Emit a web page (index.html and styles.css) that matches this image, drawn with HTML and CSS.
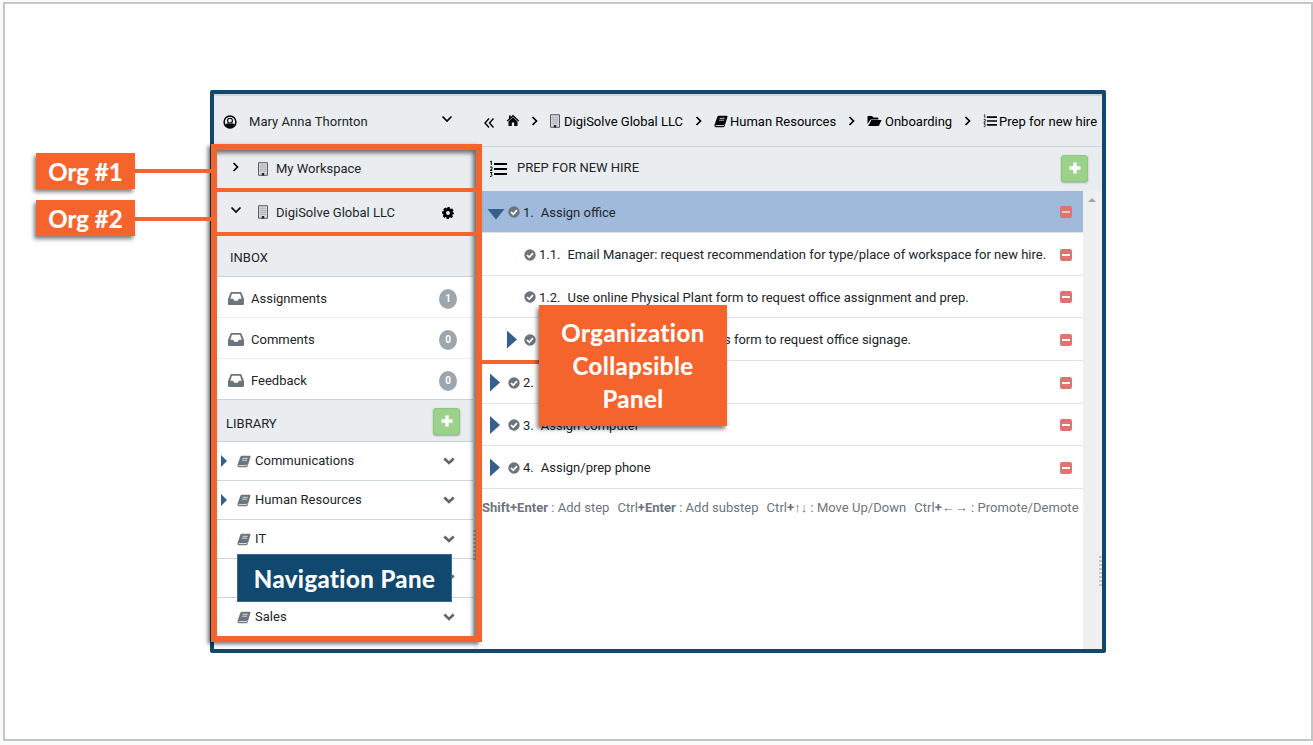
FILE: index.html
```html
<!DOCTYPE html>
<html lang="en">
<head>
    <meta charset="UTF-8">
    <meta name="viewport" content="width=device-width, initial-scale=1.0">
    <title>Navigation Pane</title>
    <link rel="stylesheet" href="styles.css">
</head>
<body>
    <!-- Icon set -->
    <svg class="sprite" width="0" height="0">
        <symbol id="user" viewBox="0 0 14 14"><circle cx="7" cy="7" r="5.900" fill="none" stroke="currentColor" stroke-width="1.500"/><path d="M2 10Q3.200 8.400 5 8.300Q7 9.700 9 8.300Q10.800 8.400 12 10Q10 13 7 13Q4 13 2 10Z"/><circle cx="7" cy="5.700" r="2.400" fill="none" stroke="currentColor" stroke-width="1.100"/></symbol>
        <symbol id="down" viewBox="0 0 12 12"><path d="M1.500 3.500L6 8L10.500 3.500" fill="none" stroke="currentColor" stroke-width="1.700"/></symbol>
        <symbol id="right" viewBox="0 0 12 12"><path d="M3.500 2L7.500 6L3.500 10" fill="none" stroke="currentColor" stroke-width="1.700"/></symbol>
        <symbol id="back" viewBox="0 0 12 12"><path d="M6 1.500L2 6L6 10.500M10.500 1.500L6.500 6L10.500 10.500" fill="none" stroke="currentColor" stroke-width="1.400"/></symbol>
        <symbol id="building" viewBox="0 0 12 14"><path d="M1.500 .700H10.500V13.300H1.500Z" fill="#d5d8dc" stroke="#5c5c68" stroke-width="1"/><path d="M4 2V10M6 2V10M8 2V10M2.500 3.500H9.500M2.500 5.500H9.500M2.500 7.500H9.500M2.500 9.500H9.500" stroke="#aeb1b8" stroke-width=".6"/><path d="M4.800 11H7.200V13.500H4.800Z" fill="#222"/></symbol>
        <symbol id="cog" viewBox="0 0 14 14"><circle cx="7" cy="7" r="3.500" fill="none" stroke="currentColor" stroke-width="3"/><circle cx="7" cy="7" r="5" fill="none" stroke="currentColor" stroke-width="2" stroke-dasharray="2.300 1.627" stroke-dashoffset="1.150"/></symbol>
        <symbol id="home" viewBox="0 0 14 13"><path d="M7 .8L13.300 6.700L12.400 7.600L7 2.700L1.600 7.600L.7 6.700L3 4.500V1.500H4.700V3Z"/><path d="M7 3.300L11.500 7.400V12H8.200V8.500H5.800V12H2.500V7.400Z"/></symbol>
        <symbol id="book" viewBox="0 0 14 13"><path d="M5 .7H12.700Q13.800 .8 13.400 2L10.800 10.800Q10.500 12.300 9 12.300H1.800Q0 12 .5 9.800L3.300 2Q3.700 .7 5 .7Z"/><path d="M5.600 3.300H10.700M5 5.200H10.100" stroke="#eef0f2" stroke-width=".8"/><path d="M1.700 10.600H9.200Q10 10.500 10.300 9.600" fill="none" stroke="#eef0f2" stroke-width=".9"/></symbol>
        <symbol id="folder" viewBox="0 0 15 12"><path d="M.5 9V1.800Q.5 1 1.400 1H5L6.500 2.600H10.500Q11.500 2.600 11.500 4.600H4.200Q3.500 4.600 3 5.300Z"/><path d="M4.400 5H14.600L12.300 10Q12 11 11 11H1.100Z"/></symbol>
        <symbol id="list" viewBox="0 0 18 18"><path d="M5 4H18M5 9H18M5 14H18" stroke="currentColor" stroke-width="2.100"/><path d="M1 2L2.300 1V5M1 7H3V9L1 10.500H3.300M1 12.500H3L2 14.200Q3.200 14.300 2.900 15.800Q2.400 17 1 16.400" fill="none" stroke="currentColor" stroke-width="1"/></symbol>
        <symbol id="inbox" viewBox="0 0 16 13"><path fill-rule="evenodd" d="M3.500 0H12.500Q13.300 0 13.600 1L16 7V12Q16 13 15 13H1Q0 13 0 12V7L2.400 1Q2.700 0 3.500 0ZM4 1.800L2.300 6.800H5.200L6.200 8.800H9.800L10.800 6.800H13.700L12 1.800Z"/></symbol>
        <symbol id="check" viewBox="0 0 12 12"><circle cx="6" cy="6" r="5.700"/><path d="M3 6L5.200 8.200L9 4.200" fill="none" stroke="#fff" stroke-width="1.700"/></symbol>
        <symbol id="chevron" viewBox="0 0 12 10"><path d="M1.300 2.500L6 7L10.700 2.500" fill="none" stroke="currentColor" stroke-width="2.700"/></symbol>
        <symbol id="plus" viewBox="0 0 12 12"><path d="M6 .5V11.500M.5 6H11.500" stroke="currentColor" stroke-width="3.400"/></symbol>
    </svg>

    <div class="slide">
        <div class="app">
            <aside class="nav">
                <div class="nav-user"><svg class="i14"><use href="#user"/></svg><span>Mary Anna Thornton</span><svg class="i12 end"><use href="#down"/></svg></div>
                <div class="nav-org first"><svg class="i12"><use href="#right"/></svg><svg class="bld"><use href="#building"/></svg><span>My Workspace</span></div>
                <div class="nav-org"><svg class="i12"><use href="#down"/></svg><svg class="bld"><use href="#building"/></svg><span>DigiSolve Global LLC</span><svg class="i14 end"><use href="#cog"/></svg></div>
                <div class="nav-title inbox-title"><span>INBOX</span></div>
                <div class="nav-inbox"><svg class="tray"><use href="#inbox"/></svg><span>Assignments</span><b class="badge">1</b></div>
                <div class="nav-inbox"><svg class="tray"><use href="#inbox"/></svg><span>Comments</span><b class="badge">0</b></div>
                <div class="nav-inbox last"><svg class="tray"><use href="#inbox"/></svg><span>Feedback</span><b class="badge">0</b></div>
                <div class="nav-title library-title"><span>LIBRARY</span><button class="add"><svg class="i12"><use href="#plus"/></svg></button></div>
                <div class="nav-lib"><i class="tri small"></i><svg class="book"><use href="#book"/></svg><span>Communications</span><svg class="chev"><use href="#chevron"/></svg></div>
                <div class="nav-lib"><i class="tri small"></i><svg class="book"><use href="#book"/></svg><span>Human Resources</span><svg class="chev"><use href="#chevron"/></svg></div>
                <div class="nav-lib"><i class="tri small off"></i><svg class="book"><use href="#book"/></svg><span>IT</span><svg class="chev"><use href="#chevron"/></svg></div>
                <div class="nav-lib"><i class="tri small off"></i><svg class="book"><use href="#book"/></svg><span></span><svg class="chev"><use href="#chevron"/></svg></div>
                <div class="nav-lib"><i class="tri small off"></i><svg class="book"><use href="#book"/></svg><span>Sales</span><svg class="chev"><use href="#chevron"/></svg></div>
            </aside>
            <div class="gutter"><i class="grip"></i></div>
            <main class="main">
                <nav class="crumbs">
                    <svg class="i12 back"><use href="#back"/></svg>
                    <svg class="home"><use href="#home"/></svg>
                    <svg class="sep"><use href="#right"/></svg>
                    <span class="crumb c1"><svg class="bld"><use href="#building"/></svg><span>DigiSolve Global LLC</span></span>
                    <svg class="sep"><use href="#right"/></svg>
                    <span class="crumb c2"><svg class="book"><use href="#book"/></svg><span>Human Resources</span></span>
                    <svg class="sep"><use href="#right"/></svg>
                    <span class="crumb c3"><svg class="folder"><use href="#folder"/></svg><span>Onboarding</span></span>
                    <svg class="sep"><use href="#right"/></svg>
                    <span class="crumb c4"><svg class="list"><use href="#list"/></svg><span>Prep for new hire</span></span>
                </nav>
                <div class="main-title"><svg class="list"><use href="#list"/></svg><span>PREP FOR NEW HIRE</span><button class="add"><svg class="i12"><use href="#plus"/></svg></button></div>
                <div class="body">
                    <div class="steps">
                        <div class="step active"><i class="tri open"></i><svg class="i12"><use href="#check"/></svg><span class="num">1.</span><span>Assign office</span><i class="minus"></i></div>
                        <div class="step sub tall"><i class="tri off"></i><svg class="i12"><use href="#check"/></svg><span class="num">1.1.</span><span>Email Manager: request recommendation for type/place of workspace for new hire.</span><i class="minus"></i></div>
                        <div class="step sub"><i class="tri off"></i><svg class="i12"><use href="#check"/></svg><span class="num">1.2.</span><span>Use online Physical Plant form to request office assignment and prep.</span><i class="minus"></i></div>
                        <div class="step sub tall"><i class="tri"></i><svg class="i12"><use href="#check"/></svg><span class="tail">s form to request office signage.</span><i class="minus"></i></div>
                        <div class="step tall"><i class="tri"></i><svg class="i12"><use href="#check"/></svg><span class="num">2.</span><i class="minus"></i></div>
                        <div class="step"><i class="tri"></i><svg class="i12"><use href="#check"/></svg><span class="num">3.</span><span>Assign computer</span><i class="minus"></i></div>
                        <div class="step tall"><i class="tri"></i><svg class="i12"><use href="#check"/></svg><span class="num">4.</span><span>Assign/prep phone</span><i class="minus"></i></div>
                        <div class="keys"><span><b>Shift+Enter</b> : Add step</span><span>Ctrl<b>+Enter</b> : Add substep</span><span>Ctrl<b>+</b><span class="arrows">↑↓</span> : Move Up/Down</span><span>Ctrl<b>+</b><span class="arrows">←→</span> : Promote/Demote</span></div>
                    </div>
                    <div class="scroll"><i class="grip"></i></div>
                </div>
            </main>
        </div>

        <!-- Callouts drawn over the app -->
        <div class="outline"></div>
        <div class="line split1"></div>
        <div class="line split2"></div>
        <div class="line to-org1"></div>
        <div class="line to-org2"></div>
        <div class="line to-panel"></div>
        <div class="callout org1">Org #1</div>
        <div class="callout org2">Org #2</div>
        <div class="callout panel">Organization<br>Collapsible<br>Panel</div>
        <div class="callout pane">Navigation Pane</div>
    </div>
</body>
</html>
```
FILE: styles.css
```css
* { box-sizing: border-box; }

body {
    margin: 0;
    padding: 2px 0 0 3px;
    height: 745px;
    overflow: hidden;
    background: #f9fbfa;
    font-family: Roboto, sans-serif;
    font-size: 13px;
    color: #212529;
}

svg { display: block; flex: none; fill: currentColor; }
.sprite { position: absolute; }
span { white-space: nowrap; }

.slide {
    width: 1310px;
    height: 739px;
    border: 2px solid #c4c6c6;
    background: #fff;
    padding: 86px 0 0 205px;
}

/* App window */
.app {
    display: grid;
    grid-template-columns: 259px 5px 1fr;
    width: 896px;
    height: 563px;
    border: 4px solid #11486f;
    border-radius: 2px;
    background: #fff;
    overflow: hidden;
}

.nav > div { display: flex; align-items: center; }
.i12 { width: 12px; height: 12px; }
.i14 { width: 14px; height: 14px; }
.bld { width: 12px; height: 14px; }
.book { width: 14px; height: 13px; }
.end { margin-left: auto; }

.nav .nav-user {
    height: 53px;
    padding: 0 20px 0 9px;
    gap: 12px;
    background: #e9edf0;
    border-top: 2px solid #d3d5d7;
    color: #000;
}
.nav-user span { color: #212529; letter-spacing: 0.05px; }
.nav-user .end { margin-top: -6px; }

.nav-org {
    height: 44px;
    padding: 0 18px 0 16px;
    background: #e9edf0;
    color: #000;
}
.nav-org.first { height: 43px; }
.nav-org .bld { margin: 0 7px 0 15px; }
.nav-org .i12 { margin-top: -4px; }
.nav-org .i14 { margin-top: 2px; }
.nav-org span { color: #212529; }

.nav-title {
    background: #e9edf0;
    border-bottom: 1px solid #c9d2d9;
}
.inbox-title { height: 43px; padding: 5px 0 0 16px; }
.library-title { height: 42px; padding: 5px 13px 0 12px; justify-content: space-between; }
.library-title .add { margin-top: -3px; }

.nav-inbox {
    height: 41px;
    padding: 3px 16px 0 14px;
    gap: 7px;
    border-bottom: 1px solid #eceef0;
}
.nav-inbox.last { border-color: #c9d2d9; }
.tray { width: 16px; height: 13px; color: #6c757d; }
.badge {
    margin-left: auto;
    width: 18px;
    height: 20px;
    border-radius: 50%;
    background: #9da5ad;
    color: #fff;
    font-size: 10px;
    line-height: 20px;
    text-align: center;
}

.nav-lib {
    height: 39px;
    padding: 0 18px 0 7px;
    border-bottom: 1px solid #ced6dd;
}
.nav-lib .book { color: #6c757d; margin: 0 4px 0 10px; }
.nav-lib span { margin-top: -1px; letter-spacing: 0.03px; }
.chev { width: 12px; height: 10px; margin-left: auto; color: #5f6870; }

.tri {
    flex: none;
    width: 10px;
    height: 18px;
    background: #355f8d;
    clip-path: polygon(0 0, 100% 50%, 0 100%);
}
.tri.small { width: 6px; height: 12px; }
.tri.off { visibility: hidden; }
.tri.open {
    width: 18px;
    height: 11px;
    margin-top: 4px;
    clip-path: polygon(0 0, 100% 0, 50% 100%);
}

.add {
    display: flex;
    justify-content: center;
    width: 27px;
    height: 27px;
    padding: 6px 0 0;
    border: 1px solid #87cb77;
    border-radius: 3px;
    background: #9bd18b;
    box-shadow: 0 1px 2px rgba(0, 0, 0, 0.3);
    color: #fff;
}

/* Splitter */
.gutter {
    padding-top: 434px;
    border-top: 2px solid #d3d5d7;
    background: linear-gradient(#ebecee 142px, #f4f4f4 142px);
}
.grip {
    display: block;
    width: 3px;
    height: 31px;
    background: repeating-linear-gradient(#c6c6c6 0 2px, transparent 2px 4px);
}

/* Main area */
.main { min-width: 0; }
.crumbs {
    display: flex;
    align-items: center;
    height: 53px;
    padding: 0 0 0 5px;
    background: #e9edf0;
    border-top: 2px solid #d3d5d7;
    border-bottom: 1px solid #c9d7e3;
    color: #000;
}
.crumbs .back { margin-top: 4px; }
.home { width: 14px; height: 13px; margin: -2px 9px 0 11px; }
.sep { width: 12px; height: 12px; }
.crumb { display: flex; align-items: center; gap: 2px; }
.c1 { width: 144px; margin-left: 8px; }
.c1 .bld { margin-right: 1px; }
.c2 { width: 132px; margin-left: 9px; }
.c3 { width: 95px; margin-left: 9px; }
.c4 { margin-left: 9px; }
.c3 .folder { width: 15px; height: 12px; margin-right: 1px; }
.crumb .list { width: 14px; height: 14px; }

.main-title {
    display: flex;
    align-items: center;
    height: 44px;
    padding: 0 14px 0 12px;
    background: #e9edf0;
}
.main-title .list { width: 18px; height: 18px; color: #000; margin: 0 10px 0 -1px; }
.main-title span { margin-top: -3px; }
.main-title .add { margin: -1px 0 0 auto; }

.body { display: flex; height: 458px; }
.steps { flex: 1; min-width: 0; }
.step {
    display: flex;
    align-items: center;
    height: 42px;
    padding: 1px 11px 0 12px;
    border-bottom: 1px solid #dde2e8;
}
.step.tall { height: 43px; }
.step.sub { padding-left: 29px; }
.step .i12 { color: #6c757d; margin: 0 3px 0 8px; }
.step.sub .i12 { margin-left: 7px; }
.step .num { margin-right: 7px; }
.step .tail { margin-left: 185px; }
.step.active { background: #9fbadb; padding-left: 9px; }
.step.active .i12 { margin-left: 3px; }
.minus {
    flex: none;
    width: 12px;
    height: 12px;
    margin-left: auto;
    border: solid #e0736f;
    border-width: 5px 2px;
    border-radius: 2px;
    background: #fff;
}
.active .minus { background: #e3c8d4; }

.keys {
    display: flex;
    gap: 8px;
    padding: 11px 0 0 4px;
    color: #6c757d;
}
.keys > span { height: 16px; line-height: 16px; letter-spacing: 0.03px; }
.arrows { font-family: "Liberation Sans", sans-serif; }

.scroll {
    width: 19px;
    padding: 365px 0 0 16px;
    background: #efefef;
    position: relative;
}
.scroll::before {
    content: '';
    position: absolute;
    left: 5px;
    top: 7px;
    border: solid transparent;
    border-width: 0 4px 4px;
    border-bottom-color: #a3a3a3;
}

/* Callouts */
.outline {
    position: absolute;
    left: 211px;
    top: 144px;
    width: 271px;
    height: 498px;
    border: 6px solid #f4642c;
    box-shadow: -3px 2px 4px rgba(0, 0, 0, 0.55), inset -3px 3px 4px rgba(0, 0, 0, 0.55);
}
.line { position: absolute; height: 4px; background: #f4642c; }
.split1 { left: 216px; top: 188px; width: 261px; }
.split2 { left: 216px; top: 232px; width: 261px; }
.to-org1 { left: 134px; top: 169px; width: 78px; }
.to-org2 { left: 134px; top: 217px; width: 78px; }
.to-panel { left: 481px; top: 360px; width: 60px; }

.callout {
    position: absolute;
    background: #f4642c;
    color: #fff;
    font-family: Lato, sans-serif;
    font-size: 24px;
    font-weight: 700;
    letter-spacing: 0.45px;
    -webkit-text-stroke: 0.2px #fff;
    text-align: center;
    white-space: nowrap;
    box-shadow: -2px 3px 4px rgba(0, 0, 0, 0.5);
}
.org1, .org2 { left: 36px; width: 99px; height: 36px; line-height: 38px; letter-spacing: 0; }
.org1 { top: 153px; }
.org2 { top: 200px; }
.panel { left: 539px; top: 305px; width: 188px; height: 121px; padding-top: 11px; line-height: 33px; }
.pane {
    left: 237px;
    top: 554px;
    width: 215px;
    height: 48px;
    line-height: 48px;
    background: #11486f;
    border: 1px solid #3a6a93;
    box-shadow: none;
}
```
